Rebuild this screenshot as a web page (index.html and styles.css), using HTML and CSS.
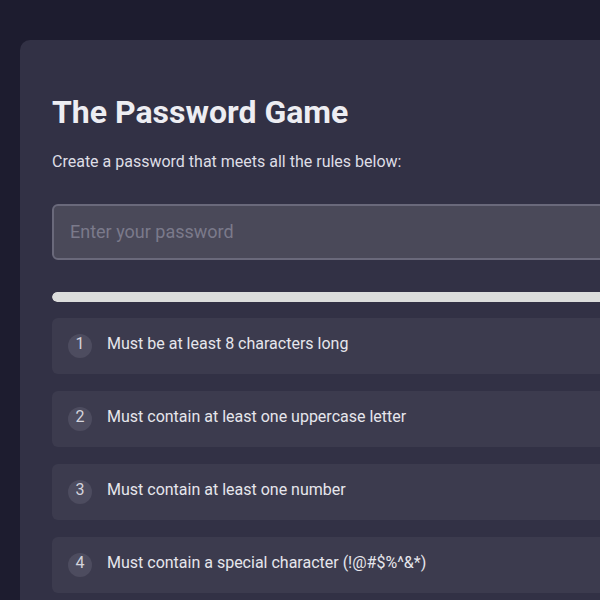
FILE: index.html
```html
<!DOCTYPE html>
<html lang="en">

<head>
  <meta charset="UTF-8">
  <meta name="viewport" content="width=device-width, initial-scale=1.0">
  <title>The Password Game</title>
  <link rel="stylesheet" href="styles.css">
</head>

<body>

  <div class="game-card">
    <h1>The Password Game</h1>
    <p class="intro">Create a password that meets all the rules below:</p>

    <input type="text" class="password-input" placeholder="Enter your password" />

    <div class="progress">
      <div class="progress-fill"></div>
    </div>

    <ul class="rules">
      <li class="rule"><span class="rule-num">1</span><span class="rule-text">Must be at least 8 characters long</span></li>
      <li class="rule"><span class="rule-num">2</span><span class="rule-text">Must contain at least one uppercase letter</span></li>
      <li class="rule"><span class="rule-num">3</span><span class="rule-text">Must contain at least one number</span></li>
      <li class="rule"><span class="rule-num">4</span><span class="rule-text">Must contain a special character (!@#$%^&amp;*)</span></li>
    </ul>
  </div>

</body>

</html>
```

FILE: styles.css
```css
html,
body {
  overflow: hidden;
}

body {
  background-color: #1d1c2f;
  color: #e6e6ec;
  font-family: Roboto, "Liberation Sans", sans-serif;
  margin: 0;
  padding: 40px 0 0 20px;
}

.game-card {
  width: 680px;
  background-color: #323145;
  border-radius: 10px;
  padding: 32px;
}

h1 {
  font-size: 32px;
  font-weight: 700;
  margin: 21px 0;
  color: #ededf2;
}

.intro {
  font-size: 16px;
  margin: 0 0 33px;
  color: #dedee6;
}

.password-input {
  display: block;
  width: 100%;
  box-sizing: border-box;
  height: 56px;
  padding: 0 16px 2px;
  background-color: #4a4959;
  border: 2px solid #6a697b;
  border-radius: 6px;
  font-family: inherit;
  font-size: 18px;
  color: #eaeaea;
  outline: none;
}

.password-input::placeholder {
  color: #7b7a8b;
}

.progress {
  height: 10px;
  margin: 32px 0 16px;
  background-color: #2a293b;
  border-radius: 5px;
  overflow: hidden;
}

.progress-fill {
  width: 100%;
  height: 100%;
  background-color: #dcdddc;
  border-radius: 5px;
}

.rules {
  list-style: none;
  margin: 0;
  padding: 0;
}

.rule {
  display: flex;
  align-items: center;
  background-color: #3c3b4e;
  border-radius: 6px;
  padding: 16px;
  margin-bottom: 17px;
  font-size: 16px;
  line-height: 20px;
  color: #e6e6ec;
}

.rule-num {
  display: flex;
  align-items: center;
  justify-content: center;
  box-sizing: border-box;
  width: 24px;
  height: 24px;
  padding-bottom: 4px;
  flex-shrink: 0;
  border-radius: 50%;
  background-color: #4d4c5f;
  color: #d4d4dc;
  font-size: 16px;
  margin-right: 15px;
}

.rule-text {
  margin-bottom: 4px;
}
```
